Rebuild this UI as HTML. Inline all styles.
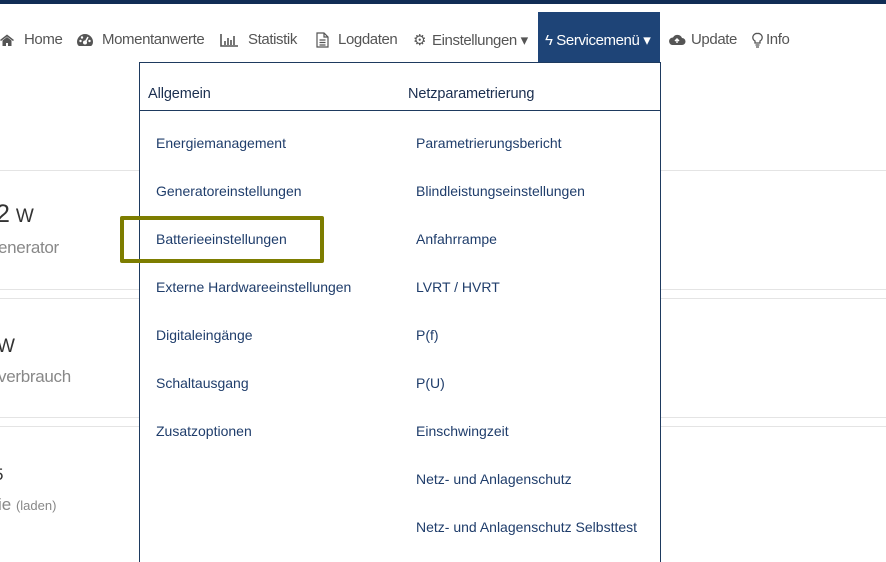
<!DOCTYPE html>
<html><head><meta charset="utf-8"><style>
*{margin:0;padding:0;box-sizing:border-box}
body{width:886px;height:556px;overflow:hidden;background:#fff;font-family:"Liberation Sans",sans-serif;position:relative}
.a{position:absolute;white-space:nowrap}
.nav{font-size:15px;color:#555;letter-spacing:-0.4px;top:31px}
.hl{position:absolute;left:0;height:1px;background:#e4e4e4}
.m{font-size:14px;color:#1f3d6b;letter-spacing:0}
.h{font-size:14.5px;color:#1a2e4f;letter-spacing:-0.1px}
</style></head><body>
<div class="a" style="left:0;top:0;width:886px;height:4px;background:#112d55"></div>

<svg class="a" style="left:0;top:34px" width="15" height="12"><path d="M0 6L7 0.5L14 6L13 7L7 2.5L1 7Z M2.5 6.5V12H6V9H8V12H11.5V6.5L7 3Z" fill="#555"/></svg>
<div class="a nav" style="left:24px">Home</div>
<svg class="a" style="left:76px;top:33px" width="18" height="14"><path d="M9 1A8 8 0 0 0 1 9C1 11 2 12.5 3 13H15C16 12.5 17 11 17 9A8 8 0 0 0 9 1Z" fill="#555"/><circle cx="9" cy="9.5" r="2" fill="#fff"/><path d="M9 9.5L12 4" stroke="#fff" stroke-width="1.5"/><circle cx="4.5" cy="8" r="1.2" fill="#fff"/><circle cx="6" cy="4.5" r="1.2" fill="#fff"/><circle cx="13.5" cy="8" r="1.2" fill="#fff"/></svg>
<div class="a nav" style="left:102px">Momentanwerte</div>
<svg class="a" style="left:220px;top:33px" width="19" height="14"><path d="M1 1V13H18M5 12V8M8 12V5M11 12V7M14 12V3" stroke="#555" stroke-width="1.6" fill="none"/></svg>
<div class="a nav" style="left:248px">Statistik</div>
<svg class="a" style="left:316px;top:32px" width="13" height="16"><path d="M1 1H8L12 5V15H1Z M8 1V5H12 M3.5 8H9.5M3.5 10.5H9.5M3.5 13H9.5" stroke="#555" stroke-width="1.2" fill="none"/></svg>
<div class="a nav" style="left:338px">Logdaten</div>
<div class="a nav" style="left:413px">⚙</div>
<div class="a nav" style="left:432px">Einstellungen ▾</div>
<div class="a" style="left:538px;top:12px;width:122px;height:50px;background:#1e4477"></div>
<div class="a nav" style="left:545px;color:#fff">ϟ Servicemenü ▾</div>
<svg class="a" style="left:668px;top:33px" width="18" height="13"><path d="M4 12H14A3.5 3.5 0 0 0 14 5A5 5 0 0 0 5 4.5A3.8 3.8 0 0 0 4 12Z" fill="#555"/><path d="M9 10V6M7 8L9 6L11 8" stroke="#fff" stroke-width="1.4" fill="none"/></svg>
<div class="a nav" style="left:691px">Update</div>
<svg class="a" style="left:752px;top:32px" width="11" height="16"><path d="M5.5 1.5A4 4 0 0 0 3 9V11H8V9A4 4 0 0 0 5.5 1.5ZM3.5 13H7.5M4 15H7" stroke="#555" stroke-width="1.3" fill="none"/></svg>
<div class="a nav" style="left:766px">Info</div>

<div class="hl" style="top:170px;width:886px"></div>
<div class="hl" style="top:289px;width:886px"></div>
<div class="hl" style="top:298px;width:886px"></div>
<div class="hl" style="top:417px;width:886px"></div>
<div class="hl" style="top:426px;width:886px"></div>

<div class="a" style="left:-4px;top:200px;font-size:25px;color:#333;letter-spacing:-0.5px">2 <span style="font-size:19px">W</span></div>
<div class="a" style="left:-2px;top:238px;font-size:17px;color:#888;letter-spacing:-0.3px">enerator</div>
<div class="a" style="left:-3px;top:336px;font-size:19px;color:#333">W</div>
<div class="a" style="left:-2px;top:367px;font-size:17px;color:#888;letter-spacing:-0.3px">verbrauch</div>
<div class="a" style="left:-6px;top:465px;font-size:17px;color:#333">5</div>
<div class="a" style="left:-2px;top:495px;font-size:17px;color:#888">ie <span style="font-size:13px">(laden)</span></div>

<div class="a" style="left:139px;top:62px;width:522px;height:500px;background:#fff;border:1px solid #1e3a5f;border-bottom:none"></div>
<div class="a" style="left:140px;top:110px;width:520px;height:1px;background:#1e3a5f"></div>
<div class="a h" style="left:148px;top:86px">Allgemein</div>
<div class="a h" style="left:408px;top:86px">Netzparametrierung</div>

<div class="a m" style="left:156px;top:135px">Energiemanagement</div>
<div class="a m" style="left:156px;top:183px">Generatoreinstellungen</div>
<div class="a m" style="left:156px;top:231px">Batterieeinstellungen</div>
<div class="a m" style="left:156px;top:279px">Externe Hardwareeinstellungen</div>
<div class="a m" style="left:156px;top:327px">Digitaleingänge</div>
<div class="a m" style="left:156px;top:375px">Schaltausgang</div>
<div class="a m" style="left:156px;top:423px">Zusatzoptionen</div>

<div class="a m" style="left:416px;top:135px">Parametrierungsbericht</div>
<div class="a m" style="left:416px;top:183px">Blindleistungseinstellungen</div>
<div class="a m" style="left:416px;top:231px">Anfahrrampe</div>
<div class="a m" style="left:416px;top:279px">LVRT / HVRT</div>
<div class="a m" style="left:416px;top:327px">P(f)</div>
<div class="a m" style="left:416px;top:375px">P(U)</div>
<div class="a m" style="left:416px;top:423px">Einschwingzeit</div>
<div class="a m" style="left:416px;top:471px">Netz- und Anlagenschutz</div>
<div class="a m" style="left:416px;top:519px">Netz- und Anlagenschutz Selbsttest</div>

<div class="a" style="left:120px;top:216px;width:204px;height:47px;border:4px solid #7d7d00;border-radius:2px"></div>
</body></html>
